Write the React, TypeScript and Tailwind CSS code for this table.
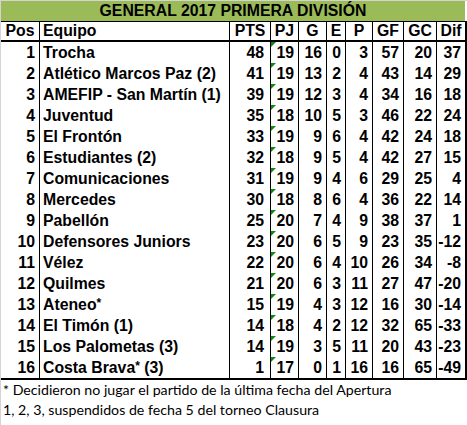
const rows: (string | number)[][] = [
  [1, "Trocha", 48, 19, 16, 0, 3, 57, 20, 37],
  [2, "Atlético Marcos Paz (2)", 41, 19, 13, 2, 4, 43, 14, 29],
  [3, "AMEFIP - San Martín (1)", 39, 19, 12, 3, 4, 34, 16, 18],
  [4, "Juventud", 35, 18, 10, 5, 3, 46, 22, 24],
  [5, "El Frontón", 33, 19, 9, 6, 4, 42, 24, 18],
  [6, "Estudiantes (2)", 32, 18, 9, 5, 4, 42, 27, 15],
  [7, "Comunicaciones", 31, 19, 9, 4, 6, 29, 25, 4],
  [8, "Mercedes", 30, 18, 8, 6, 4, 36, 22, 14],
  [9, "Pabellón", 25, 20, 7, 4, 9, 38, 37, 1],
  [10, "Defensores Juniors", 23, 20, 6, 5, 9, 23, 35, -12],
  [11, "Vélez", 22, 20, 6, 4, 10, 26, 34, -8],
  [12, "Quilmes", 21, 20, 6, 3, 11, 27, 47, -20],
  [13, "Ateneo*", 15, 19, 4, 3, 12, 16, 30, -14],
  [14, "El Timón (1)", 14, 18, 4, 2, 12, 32, 65, -33],
  [15, "Los Palometas (3)", 14, 19, 3, 5, 11, 20, 43, -23],
  [16, "Costa Brava* (3)", 1, 17, 0, 1, 16, 16, 65, -49],
];

const headers = ["Pos", "Equipo", "PTS", "PJ", "G", "E", "P", "GF", "GC", "Dif"];

const gridCols =
  "grid grid-cols-[39px_190px_41px_28px_28px_19px_27px_31px_33px_30px]";

function cellBorder(i: number) {
  return i === 9 ? "border-r-2 border-black" : "border-r border-black";
}

// asterisk in Excel's Arial sits small and high
function TeamName({ name }: { name: string }) {
  const parts = name.split("*");
  if (parts.length === 1) return <>{name}</>;
  return (
    <>
      {parts[0]}
      <span className="text-[12px] self-start mt-[3px]">*</span>
      {parts[1] && <span className="whitespace-pre">{parts[1]}</span>}
    </>
  );
}

export default function App() {
  return (
    <div
      className="w-[467px] h-[425px] bg-white border-l border-t border-[#d4d4d4] text-black overflow-hidden"
      style={{ fontFamily: '"Liberation Sans", Arial, sans-serif' }}
    >
      {/* title */}
      <div className="flex">
        <div className="w-[464px] h-[20px] bg-[#9bbb59] flex items-center justify-center font-bold text-[15.8px] leading-none">
          GENERAL 2017 PRIMERA DIVISIÓN
        </div>
      </div>
      <div className="h-px w-[466px] bg-black" />

      {/* header */}
      <div className={`${gridCols} h-[20px] border-b-2 border-black font-bold text-[15.8px] leading-none`}>
        {headers.map((h, i) => (
          <div
            key={h}
            className={`${cellBorder(i)} flex items-center ${
              i === 1 ? "pl-[3px]" : "justify-center"
            }`}
          >
            {h}
          </div>
        ))}
      </div>

      {/* body */}
      <div className="border-b-2 border-black w-[466px]">
        {rows.map((r) => (
          <div key={r[0]} className={`${gridCols} h-[21px] font-bold text-[15.8px] leading-none`}>
            {r.map((v, i) => (
              <div
                key={i}
                className={`${cellBorder(i)} relative flex items-center whitespace-nowrap ${
                  i === 1 ? "pl-[3px]" : i === 2 ? "justify-end pr-[6px]" : "justify-end pr-[4px]"
                }`}
              >
                {i === 3 && (
                  <span className="absolute top-0 left-0 w-0 h-0 border-t-[5px] border-t-[#108a10] border-r-[5px] border-r-transparent" />
                )}
                {i === 1 ? <TeamName name={String(v)} /> : v}
              </div>
            ))}
          </div>
        ))}
      </div>

      {/* notes */}
      <div
        className="text-[14.2px] leading-none pl-[2px]"
        style={{ fontFamily: "Lato, 'Noto Sans', sans-serif" }}
      >
        <div className="h-[20px] flex items-center">
          * Decidieron no jugar el partido de la última fecha del Apertura
        </div>
        <div className="h-[20px] flex items-center">
          1, 2, 3, suspendidos de fecha 5 del torneo Clausura
        </div>
      </div>
    </div>
  );
}
